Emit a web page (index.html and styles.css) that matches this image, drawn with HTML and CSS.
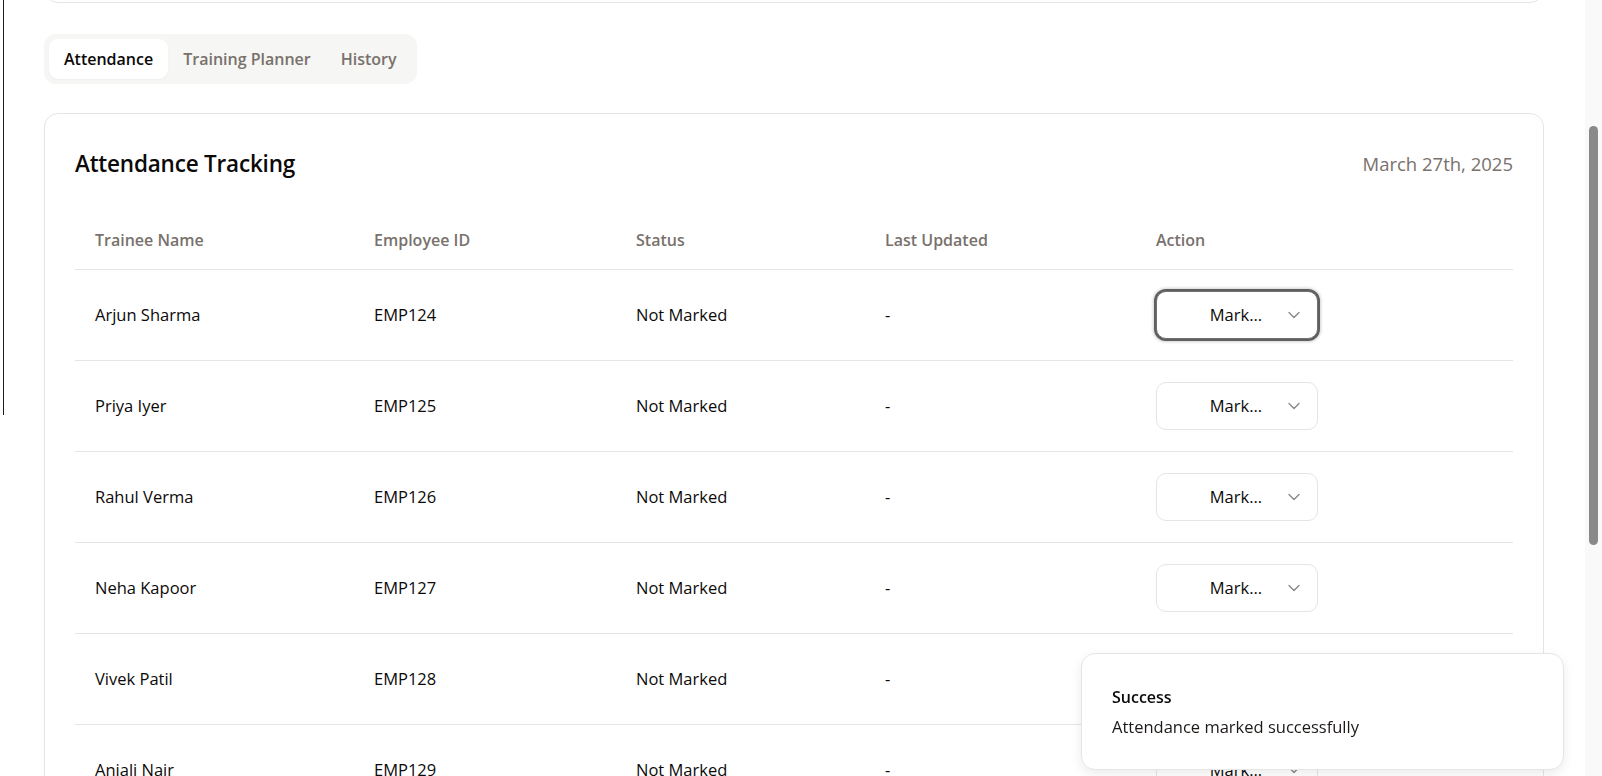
FILE: index.html
```html
<!DOCTYPE html>
<html lang="en">
<head>
<meta charset="utf-8">
<title>Attendance Tracking</title>
<link rel="stylesheet" href="styles.css">
</head>
<body>
<div class="edge-line"></div>
<main class="page">
  <section class="card overview"></section>

  <nav class="tabs">
    <button class="tab active">Attendance</button>
    <button class="tab">Training Planner</button>
    <button class="tab">History</button>
  </nav>

  <section class="card tracking">
    <div class="tracking-head">
      <h2 class="tracking-title">Attendance Tracking</h2>
      <span class="tracking-date">March 27th, 2025</span>
    </div>
    <table class="grid">
      <colgroup>
        <col class="c1"><col class="c2"><col class="c3"><col class="c4"><col>
      </colgroup>
      <thead>
        <tr><th>Trainee Name</th><th>Employee ID</th><th>Status</th><th>Last Updated</th><th>Action</th></tr>
      </thead>
      <tbody>
        <tr><td>Arjun Sharma</td><td>EMP124</td><td>Not Marked</td><td>-</td><td><button class="select focused"><span>Mark…</span><svg viewBox="0 0 24 24" class="chev"><path d="m6 9 6 6 6-6"/></svg></button></td></tr>
        <tr><td>Priya Iyer</td><td>EMP125</td><td>Not Marked</td><td>-</td><td><button class="select"><span>Mark…</span><svg viewBox="0 0 24 24" class="chev"><path d="m6 9 6 6 6-6"/></svg></button></td></tr>
        <tr><td>Rahul Verma</td><td>EMP126</td><td>Not Marked</td><td>-</td><td><button class="select"><span>Mark…</span><svg viewBox="0 0 24 24" class="chev"><path d="m6 9 6 6 6-6"/></svg></button></td></tr>
        <tr><td>Neha Kapoor</td><td>EMP127</td><td>Not Marked</td><td>-</td><td><button class="select"><span>Mark…</span><svg viewBox="0 0 24 24" class="chev"><path d="m6 9 6 6 6-6"/></svg></button></td></tr>
        <tr><td>Vivek Patil</td><td>EMP128</td><td>Not Marked</td><td>-</td><td><button class="select"><span>Mark…</span><svg viewBox="0 0 24 24" class="chev"><path d="m6 9 6 6 6-6"/></svg></button></td></tr>
        <tr><td>Anjali Nair</td><td>EMP129</td><td>Not Marked</td><td>-</td><td><button class="select"><span>Mark…</span><svg viewBox="0 0 24 24" class="chev"><path d="m6 9 6 6 6-6"/></svg></button></td></tr>
      </tbody>
    </table>
  </section>
</main>

<div class="scrollbar" aria-hidden="true"><div class="scrollbar-thumb"></div></div>

<div class="toast" role="status">
  <div class="toast-title">Success</div>
  <div class="toast-desc">Attendance marked successfully</div>
</div>
<script src="script.js"></script>
</body>
</html>
```

FILE: styles.css
```css
html {
  background: #ffffff;
}

body {
  margin: 0;
  font-family: "Segoe UI", "Open Sans", "Noto Sans", sans-serif;
  font-size: 16.5px;
  line-height: 24px;
  color: #0c0a09;
  position: relative;
}

.edge-line {
  position: absolute;
  left: 3px;
  top: 0;
  width: 1px;
  height: 648px;
  background: #1c1c1c;
}

.page {
  padding: 24px 58px 82px 44px;
  display: flex;
  flex-direction: column;
  align-items: flex-start;
  gap: 30px;
}

.card {
  box-sizing: border-box;
  width: 100%;
  background: #fff;
  border: 1px solid #e7e5e4;
  border-radius: 14px;
}

.overview {
  min-height: 212px;
}

.tabs {
  display: flex;
  padding: 5px;
  background: #f6f6f5;
  border-radius: 12px;
  margin-top: 1px;
}
.tab {
  font: inherit;
  font-weight: 600;
  font-size: 16px;
  line-height: 24px;
  padding: 8px 15px;
  border: 0;
  background: transparent;
  color: #78716c;
  border-radius: 9px;
}
.tab.active {
  background: #fff;
  color: #0c0a09;
  box-shadow: 0 1px 2px rgba(0, 0, 0, 0.04);
}

.tracking {
  padding: 34px 30px 32px;
  margin-top: -1px;
}
.tracking-head {
  display: flex;
  justify-content: space-between;
  align-items: center;
  margin-bottom: 33px;
}
.tracking-title {
  margin: 0;
  font-size: 22.5px;
  line-height: 32px;
  font-weight: 600;
  letter-spacing: -0.2px;
}
.tracking-date {
  font-size: 18.5px;
  color: #78716c;
}

.grid {
  width: 100%;
  border-collapse: collapse;
  table-layout: fixed;
}
.grid .c1 { width: 279px; }
.grid .c2 { width: 262px; }
.grid .c3 { width: 249px; }
.grid .c4 { width: 271px; }

.grid th {
  text-align: left;
  font-weight: 600;
  font-size: 16px;
  color: #78716c;
  padding: 15px 20px 17px;
  border-bottom: 1px solid #e7e5e4;
}
.grid td {
  padding: 21px 20px;
  border-bottom: 1px solid #e7e5e4;
  vertical-align: middle;
  white-space: nowrap;
}

.select {
  box-sizing: border-box;
  width: 162px;
  height: 48px;
  display: flex;
  align-items: center;
  justify-content: flex-end;
  gap: 22px;
  padding: 0 13px 0 16px;
  font: inherit;
  color: #0c0a09;
  background: #fff;
  border: 1px solid #e7e5e4;
  border-radius: 10px;
}
.select.focused {
  border-color: #707070;
  box-shadow: 0 0 0 2px #5f5f5f, 0 0 3px 3px rgba(0, 0, 0, 0.18);
}
.chev {
  width: 20px;
  height: 20px;
  fill: none;
  stroke: #8a8786;
  stroke-width: 1.6;
  stroke-linecap: round;
  stroke-linejoin: round;
}

.scrollbar {
  position: fixed;
  top: 0;
  right: 0;
  bottom: 0;
  width: 17px;
  background: #f9f9f9;
}
.scrollbar-thumb {
  position: absolute;
  top: 126px;
  left: 4px;
  width: 9px;
  height: 419px;
  border-radius: 5px;
  background: #898989;
}

.toast {
  position: fixed;
  right: 38px;
  bottom: 6px;
  box-sizing: border-box;
  width: 483px;
  padding: 31px 30px 30px;
  background: #fff;
  border: 1px solid #e7e5e4;
  border-radius: 14px;
  box-shadow: 0 4px 12px rgba(0, 0, 0, 0.08);
}
.toast-title {
  font-weight: 600;
  font-size: 16px;
  line-height: 24px;
}
.toast-desc {
  margin-top: 6px;
  font-size: 16.5px;
  line-height: 24px;
  color: #1c1917;
}
```

FILE: script.js
```js
function setScroll() {
  window.scrollTo(0, 233);
}
setScroll();
window.addEventListener('load', setScroll);
```
